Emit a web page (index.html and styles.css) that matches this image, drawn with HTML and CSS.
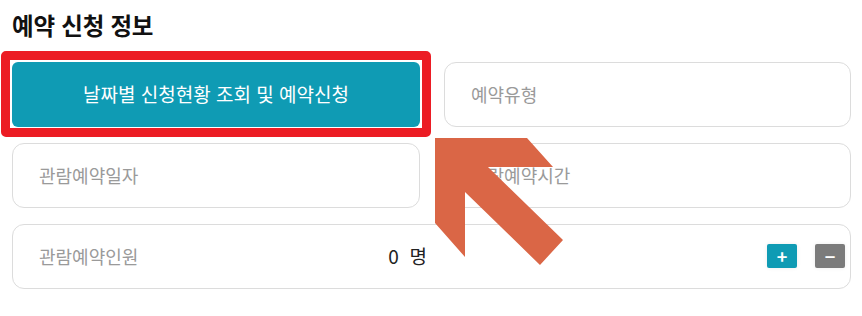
FILE: index.html
```html
<!DOCTYPE html>
<html lang="ko">
<head>
<meta charset="utf-8">
<link rel="stylesheet" href="styles.css">
</head>
<body>
<div class="page">
  <h2 class="title">예약 신청 정보</h2>
  <div class="grid">
    <div class="btn-cell">
      <button class="main-btn">날짜별 신청현황 조회 및 예약신청</button>
      <div class="highlight"></div>
    </div>
    <div class="card">예약유형</div>
    <div class="card">관람예약일자</div>
    <div class="card">관람예약시간</div>
    <div class="card wide">
      <div class="count-part">
        <span class="label">관람예약인원</span>
        <span class="count">0&nbsp;&nbsp;명</span>
      </div>
      <div class="steppers">
        <span class="step plus">+</span>
        <span class="step minus">−</span>
      </div>
    </div>
  </div>
  <svg class="arrow" width="862" height="316" viewBox="0 0 862 316">
    <polygon points="435,138 527,138 553,167 488,167 563,240 540,265 465,192 465,257 435,223" fill="#da6646"/>
  </svg>
</div>
</body>
</html>
```
FILE: styles.css
```css
html, body {
  margin: 0;
  padding: 0;
  background: #fff;
}
body {
  font-family: "Noto Sans CJK KR", "Noto Sans", sans-serif;
}
.page {
  position: relative;
  width: 862px;
  height: 316px;
  padding: 0 11px 0 12px;
  box-sizing: border-box;
}
.title {
  margin: 0;
  padding-top: 9px;
  height: 62px;
  box-sizing: border-box;
  font-size: 23.5px;
  line-height: 32px;
  font-weight: 700;
  color: #111;
  letter-spacing: -0.2px;
}
.grid {
  display: grid;
  grid-template-columns: 408px 407px;
  grid-auto-rows: 65px;
  column-gap: 24px;
  row-gap: 16px;
}
.btn-cell {
  position: relative;
}
.main-btn {
  width: 100%;
  height: 100%;
  border: none;
  border-radius: 6px;
  background: #0f9bb4;
  color: #fff;
  font-family: "Noto Sans CJK KR", "Noto Sans", sans-serif;
  font-size: 19px;
  padding: 0;
  padding-bottom: 2px;
  letter-spacing: 0;
}
.highlight {
  position: absolute;
  left: -11px;
  top: -11px;
  right: -11px;
  bottom: -10px;
  border: 9px solid #ec1c24;
  border-radius: 5px;
  pointer-events: none;
}
.card {
  border: 1px solid #dcdcdc;
  border-radius: 12px;
  display: flex;
  align-items: center;
  padding-left: 26px;
  padding-bottom: 2px;
  color: #9a9a9a;
  font-size: 18px;
}
.card.wide {
  grid-column: 1 / span 2;
  padding-right: 5px;
}
.count-part {
  width: 388px;
  display: flex;
  justify-content: space-between;
  align-items: center;
}
.count {
  color: #222;
  font-size: 19px;
}
.steppers {
  margin-left: auto;
  display: flex;
  gap: 18px;
}
.step {
  width: 30px;
  height: 24px;
  border-radius: 2px;
  color: #fff;
  display: flex;
  align-items: center;
  justify-content: center;
  font-size: 18px;
  font-weight: 700;
  line-height: 1;
  box-shadow: 0 0 4px rgba(0,0,0,0.08);
}
.plus { background: #0f9bb4; }
.minus { background: #7b7b7b; }
.arrow {
  position: absolute;
  left: 0;
  top: 0;
  pointer-events: none;
}
```
